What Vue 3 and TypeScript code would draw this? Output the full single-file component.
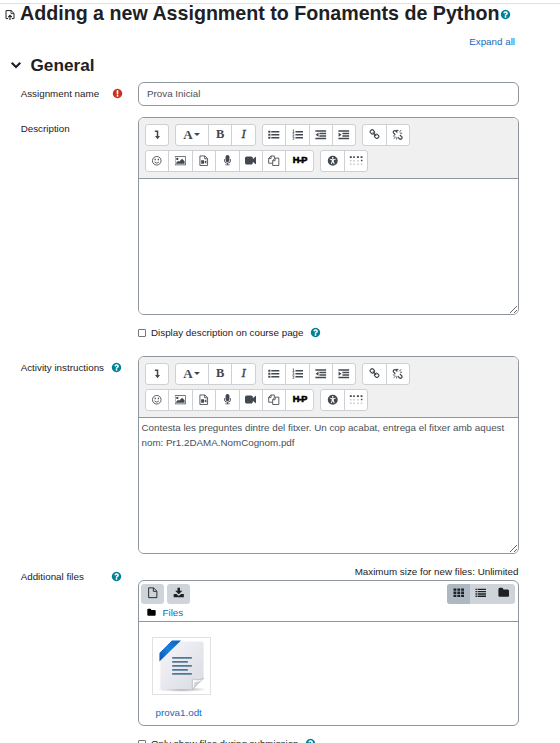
<script setup lang="ts">
import { defineComponent, h, ref } from 'vue'

interface Shape {
  d: string
  stroke?: number
  opacity?: number
}
interface Glyph {
  box: string
  shapes: Shape[]
}

const FA = '0 0 1792 1792'
const glyphs: Record<string, Glyph> = {
  help: { box: FA, shapes: [{ d: 'M1024 1376v-192q0-14-9-23t-23-9h-192q-14 0-23 9t-9 23v192q0 14 9 23t23 9h192q14 0 23-9t9-23zm256-672q0-88-55.5-163t-138.5-116-170-41q-243 0-371 213-15 24 8 42l132 100q7 6 19 6 16 0 25-12 53-68 86-92 34-24 86-24 48 0 85.5 26t37.5 59q0 38-20 61t-68 45q-63 28-115.5 86.5t-52.5 125.5v36q0 14 9 23t23 9h192q14 0 23-9t9-23q0-19 21.5-49.5t54.5-49.5q32-18 49-28.5t46-35 44.5-48 28-60.5 12.5-81zm384 192q0 209-103 385.5t-279.5 279.5-385.5 103-385.5-103-279.5-279.5-103-385.5 103-385.5 279.5-279.5 385.5-103 385.5 103 279.5 279.5 103 385.5z' }] },
  required: { box: FA, shapes: [{ d: 'M896 128q209 0 385.5 103t279.5 279.5 103 385.5-103 385.5-279.5 279.5-385.5 103-385.5-103-279.5-279.5-103-385.5 103-385.5 279.5-279.5 385.5-103zm128 1247v-190q0-14-9-23.5t-22-9.5h-192q-13 0-23 10t-10 23v190q0 13 10 23t23 10h192q13 0 22-9.5t9-23.5zm-2-344l18-621q0-12-10-18-10-8-24-8h-220q-14 0-24 8-10 6-10 18l17 621q0 10 10 17.5t24 7.5h185q14 0 23.5-7.5t10.5-17.5z' }] },
  chevron: { box: '0 0 12 12', shapes: [{ d: 'M1.7 3.8L6 8L10.3 3.8', stroke: 2.1 }] },
  assign: { box: '0 0 10 12', shapes: [{ d: 'M3.2 9.6H1V1.6H6.2L9 4.4V9.6H6.8', stroke: 1 }, { d: 'M6 1.6V4.6H9', stroke: 0.8 }, { d: 'M5 11V6.6M3.2 8.2L5 6.4L6.8 8.2', stroke: 1.1 }] },
  toggle: { box: '0 0 12 12', shapes: [{ d: 'M4 2.3H6.8V8.5', stroke: 1.6 }, { d: 'M4.2 7.2H9.4L6.8 10.6Z' }] },
  ul: { box: '0 0 12 12', shapes: [{ d: 'M.3 1.7h2.2v2.2H.3zM.3 4.9h2.2v2.2H.3zM.3 8.1h2.2v2.2H.3zM3.4 2h8.4v1.6H3.4zM3.4 5.2h8.4v1.6H3.4zM3.4 8.4h8.4V10H3.4z' }] },
  ol: { box: '0 0 12 12', shapes: [{ d: 'M3.6 2h8.2v1.6H3.6zM3.6 5.2h8.2v1.6H3.6zM3.600 8.4h8.2V10H3.6z' }, { d: 'M.7 1.2L1.6.8V3.6M.6 3.7H2.5M.6 5.1Q1.9 4.2 2.2 5.2Q2.2 5.9.7 7.1H2.5M.6 8.4H2.2L1.4 9.4Q2.5 9.7 2.2 10.6Q1.6 11.3.6 10.9', stroke: 0.7 }] },
  outdent: { box: '0 0 12 12', shapes: [{ d: 'M.4 1.3h11.2v1.5H.4zM4.600 3.9h7v1.5h-7zM4.600 6.5h7V8h-7zM.4 9.1h11.2v1.5H.4zM3.7 3.6v4.6L.6 5.900z' }] },
  indent: { box: '0 0 12 12', shapes: [{ d: 'M.4 1.3h11.2v1.5H.4zM4.600 3.9h7v1.5h-7zM4.600 6.5h7V8h-7zM.4 9.1h11.2v1.5H.4zM.6 3.6v4.6L3.7 5.900z' }] },
  link: { box: FA, shapes: [{ d: 'M1520 1216q0-40-28-68l-208-208q-28-28-68-28-42 0-72 32 3 3 19 18.5t21.5 21.5 15 19 13 25.5 3.5 27.5q0 40-28 68t-68 28q-15 0-27.5-3.5t-25.5-13-19-15-21.5-21.5-18.5-19q-33 31-33 73 0 40 28 68l206 207q27 27 68 27 40 0 68-26l147-146q28-28 28-67zm-703-705q0-40-28-68l-206-207q-28-28-68-28-39 0-68 27l-147 146q-28 28-28 67 0 40 28 68l208 208q27 27 68 27 42 0 72-31-3-3-19-18.5t-21.5-21.5-15-19-13-25.5-3.5-27.5q0-40 28-68t68-28q15 0 27.5 3.5t25.5 13 19 15 21.5 21.5 18.5 19q33-31 33-73zm895 705q0 120-85 203l-147 146q-83 83-203 83-121 0-204-85l-206-207q-83-83-83-203 0-123 88-209l-88-88q-86 88-208 88-120 0-204-84l-208-208q-84-84-84-204t85-203l147-146q83-83 203-83 121 0 204 85l206 207q83 83 83 203 0 123-88 209l88 88q86-88 208-88 120 0 204 84l208 208q84 84 84 204z' }] },
  unlink: { box: '0 0 12 12', shapes: [{ d: 'M3.600 2.6L4.6 1.600Q5.500 1 6.600 1.900M8.2 6.200L10 8Q11 9.2 10 10.200Q8.800 11.200 7.700 10.200L6 8.500M5.600 3.600L3.900 2.100Q2.700 1.200 1.700 2.200Q.9 3.300 1.800 4.300L3.500 6', stroke: 1.3 }, { d: 'M7.600 3.400L9.600 1.200M8.300 4.400H10.600M3.900 8.100L1.800 10.300M3.300 7.300H1M4.900 8.700V11', stroke: 0.9 }] },
  smile: { box: '0 0 12 12', shapes: [{ d: 'M6 1.5A4.5 4.5 0 1 1 6 10.5A4.5 4.5 0 1 1 6 1.5ZM3.7 7.2Q6 9.8 8.3 7.2', stroke: 0.9 }, { d: 'M3.7 4h1.3v1.4H3.7zM7 4h1.3v1.4H7z' }] },
  image: { box: '0 0 1920 1792', shapes: [{ d: 'M576 576q0 80-56 136t-136 56-136-56-56-136 56-136 136-56 136 56 56 136zm1024 384v448h-1408v-192l320-320 160 160 512-512zm96-704h-1600q-13 0-22.5 9.5t-9.5 22.5v1216q0 13 9.5 22.5t22.5 9.5h1600q13 0 22.5-9.5t9.5-22.5v-1216q0-13-9.5-22.5t-22.5-9.5zm160 32v1216q0 66-47 113t-113 47h-1600q-66 0-113-47t-47-113v-1216q0-66 47-113t113-47h1600q66 0 113 47t47 113z' }] },
  media: { box: '0 0 12 12', shapes: [{ d: 'M2 1H7.2L10 3.8V11H2ZM7 1V4H10', stroke: 0.9 }, { d: 'M3.3 5.6h3v3.4h-3zM6.4 7.2L8.8 5.4V9.2z' }] },
  mic: { box: FA, shapes: [{ d: 'M1472 704v128q0 221-147.5 384.5t-364.5 187.5v132h256q26 0 45 19t19 45-19 45-45 19h-640q-26 0-45-19t-19-45 19-45 45-19h256v-132q-217-24-364.5-187.5t-147.5-384.5v-128q0-26 19-45t45-19 45 19 19 45v128q0 185 131.5 316.5t316.5 131.5 316.5-131.5 131.5-316.5v-128q0-26 19-45t45-19 45 19 19 45zm-256-384v512q0 132-94 226t-226 94-226-94-94-226v-512q0-132 94-226t226-94 226 94 94 226z' }] },
  video: { box: FA, shapes: [{ d: 'M1792 352v1088q0 42-39 59-13 5-25 5-27 0-45-19l-403-403v166q0 119-84.5 203.5t-203.5 84.5h-704q-119 0-203.5-84.5t-84.5-203.5v-704q0-119 84.5-203.5t203.5-84.5h704q119 0 203.5 84.5t84.5 203.5v165l403-402q18-19 45-19 12 0 25 5 39 17 39 59z' }] },
  copy: { box: '0 0 12 12', shapes: [{ d: 'M4.8 8.6H.7V3.5L3 1H6.6V3.4M3.2 1V3.7H.7M4.9 5.8L7.3 3.3H11.3V11H4.9ZM7.4 3.3V6H4.9', stroke: 0.9 }] },
  access: { box: '0 0 12 12', shapes: [{ d: 'M6 .8A5.2 5.2 0 1 1 6 11.2A5.2 5.2 0 1 1 6 .8ZM6 2A.9.9 0 1 0 6 3.8A.9.9 0 1 0 6 2ZM2.9 3.9L2.8 4.6L4.9 5.2V6.7L4 9.4L4.8 9.6L6 7.2L7.2 9.6L8 9.4L7.1 6.7V5.2L9.2 4.6L9.1 3.9L6 4.4Z' }] },
  braille: { box: '0 0 14 12', shapes: [{ d: 'M.8 1.2h2v1.900h-2zM4.200 1.2H5.800v1.900H4.200zM7.900 1.2h2v1.900h-2zM11.600 1.2h1.900v1.900h-1.900zM11.900 4.700h1.500v1.500h-1.500z' }, { d: 'M1 5h1.5v1.5H1zM4.200 5h1.5v1.5H4.200zM1 8.4h1.5v1.5H1zM4.200 8.4h1.5v1.5H4.200zM8.2 5h1.5v1.5H8.2zM8.2 8.4h1.5v1.5H8.2zM11.800 8.4h1.5v1.5h-1.5z', opacity: 0.3 }] },
  file: { box: '0 0 12 12', shapes: [{ d: 'M1.7.9H6.8L10.3 4.3V11.1H1.7ZM6.6 1V4.5H10.2', stroke: 0.95 }] },
  download: { box: '0 0 12 12', shapes: [{ d: 'M4.7.8H7.3V4H9.8L6 7.6L2.2 4H4.7ZM.7 7.3H3.6L6 9.4L8.4 7.3H11.3V10.6H.7Z' }] },
  grid: { box: '0 0 12 12', shapes: [{ d: 'M.5 1.5h3v2.4h-3zM4.5 1.5h3v2.4h-3zM8.5 1.5h3v2.4h-3zM.5 4.8h3v2.4h-3zM4.5 4.8h3v2.4h-3zM8.5 4.8h3v2.4h-3zM.5 8.1h3v2.4h-3zM4.5 8.1h3v2.4h-3zM8.5 8.1h3v2.4h-3z' }] },
  list: { box: '0 0 12 12', shapes: [{ d: 'M.5 1.7H2v1.5H.5zM.5 4.1H2v1.5H.5zM.5 6.5H2V8H.5zM.5 8.9H2v1.5H.5zM2.7 1.7h8.8v1.5H2.7zM2.7 4.1h8.8v1.5H2.7zM2.7 6.5h8.8V8H2.7zM2.7 8.9h8.8v1.5H2.7z' }] },
  folder: { box: FA, shapes: [{ d: 'M1728 608v704q0 92-66 158t-158 66h-1216q-92 0-158-66t-66-158v-960q0-92 66-158t158-66h320q92 0 158 66t66 158v32h672q92 0 158 66t66 158z' }] },
}

const Icon = defineComponent({
  props: { name: { type: String, required: true } },
  setup(props) {
    return () => {
      const g = glyphs[props.name]
      return h(
        'svg',
        { viewBox: g.box, 'aria-hidden': 'true' },
        g.shapes.map((s) =>
          h('path', {
            d: s.d,
            fill: s.stroke ? 'none' : 'currentColor',
            'fill-rule': 'evenodd',
            stroke: s.stroke ? 'currentColor' : 'none',
            'stroke-width': s.stroke ?? 0,
            opacity: s.opacity ?? 1,
          }),
        ),
      )
    }
  },
})

const toolbarRows: string[][][] = [
  [['toggle'], ['style', 'bold', 'italic'], ['ul', 'ol', 'outdent', 'indent'], ['link', 'unlink']],
  [['smile', 'image', 'media', 'mic', 'video', 'copy', 'h5p'], ['access', 'braille']],
]
const letters: Record<string, string> = { style: 'A', bold: 'B', italic: 'I', h5p: 'H-P' }

const assignmentName = ref('Prova Inicial')
const editors = ref([
  { id: 'description', label: 'Description', help: false, text: '', checkbox: 'Display description on course page' },
  {
    id: 'instructions',
    label: 'Activity instructions',
    help: true,
    text: 'Contesta les preguntes dintre del fitxer. Un cop acabat, entrega el fitxer amb aquest nom: Pr1.2DAMA.NomCognom.pdf',
    checkbox: '',
  },
])
const views = ['grid', 'list', 'folder']
const activeView = ref('grid')
</script>

<template>
  <main class="page">
    <h2 class="title">
      <Icon name="assign" class="assign" />
      <span>Adding a new Assignment to Fonaments de Python</span>
      <Icon name="help" class="help" />
    </h2>
    <div class="expand"><a>Expand all</a></div>
    <h3 class="section">
      <Icon name="chevron" class="chevron" />
      <span>General</span>
    </h3>

    <div class="row name-row">
      <div class="label">
        <span>Assignment name</span>
        <Icon name="required" class="help required" />
      </div>
      <input v-model="assignmentName" class="field" type="text" />
    </div>

    <div v-for="e in editors" :key="e.id" class="row editor-row">
      <div class="label editor-label">
        <span>{{ e.label }}</span>
        <Icon v-if="e.help" name="help" class="help" />
      </div>
      <div class="content">
        <div class="editor">
          <div class="toolbar">
            <div v-for="(groups, r) in toolbarRows" :key="r" class="tool-row">
              <div v-for="(group, g) in groups" :key="g" class="group">
                <button v-for="b in group" :key="b" type="button" class="tool" :class="'tool-' + b">
                  <span v-if="letters[b]">{{ letters[b] }}</span>
                  <Icon v-else :name="b" class="tool-icon" />
                  <i v-if="b === 'style'" class="caret"></i>
                </button>
              </div>
            </div>
          </div>
          <textarea v-model="e.text" class="area" spellcheck="false"></textarea>
        </div>
        <label v-if="e.checkbox" class="check">
          <input type="checkbox" />
          <span>{{ e.checkbox }}</span>
          <Icon name="help" class="help" />
        </label>
      </div>
    </div>

    <div class="row files-row">
      <div class="label files-label">
        <span>Additional files</span>
        <Icon name="help" class="help" />
      </div>
      <div class="content">
        <div class="limit">Maximum size for new files: Unlimited</div>
        <div class="manager">
          <div class="manager-head">
            <div class="manager-bar">
              <div class="actions">
                <button type="button" class="act"><Icon name="file" class="act-icon" /></button>
                <button type="button" class="act"><Icon name="download" class="act-icon" /></button>
              </div>
              <div class="views">
                <button
                  v-for="v in views"
                  :key="v"
                  type="button"
                  class="view"
                  :class="{ active: v === activeView }"
                  @click="activeView = v"
                >
                  <Icon :name="v" class="act-icon" />
                </button>
              </div>
            </div>
            <div class="crumb">
              <Icon name="folder" class="crumb-icon" />
              <a>Files</a>
            </div>
          </div>
          <div class="tile">
            <div class="thumb">
              <svg viewBox="0 0 56 56" class="doc">
                <defs>
                  <linearGradient id="paper" x1="0" y1="0" x2="1" y2="1">
                    <stop offset="0" stop-color="#f6f6f9" />
                    <stop offset="1" stop-color="#d9dae3" />
                  </linearGradient>
                  <linearGradient id="ribbon" x1="0" y1="1" x2="1" y2="0">
                    <stop offset="0" stop-color="#0b50a8" />
                    <stop offset=".5" stop-color="#1a80dd" />
                    <stop offset="1" stop-color="#0e5cb8" />
                  </linearGradient>
                  <radialGradient id="shade">
                    <stop offset="0" stop-color="#777" stop-opacity=".8" />
                    <stop offset="1" stop-color="#999" stop-opacity="0" />
                  </radialGradient>
                </defs>
                <ellipse cx="28" cy="51.3" rx="26" ry="2.6" fill="url(#shade)" />
                <path d="M8 2.5H48Q50 2.5 50 4.500V40L38.500 51.500H8Q6 51.500 6 49.500V4.500Q6 2.500 8 2.500Z" fill="url(#paper)" />
                <path d="M50 40L38.500 51.500V41.500Q39 39.500 41 41.500Q46 42 50 40Z" fill="#fafafa" stroke="#aaacb3" stroke-width=".7" />
                <path d="M39.500 50.500L41 44L47.500 42.500Z" fill="#cfd0d4" />
                <path d="M5 23V14L17.500 1.500H27Z" fill="url(#ribbon)" />
                <path d="M4 15V1H18Z" fill="#fff" />
                <path d="M18 19.200H38M18 23.300H34M18 27.400H38M18 31.400H34M18 35.500H38" stroke="#4f7a96" stroke-width="1.700" />
              </svg>
            </div>
            <a class="file-name">prova1.odt</a>
          </div>
        </div>
        <label class="check last-check">
          <input type="checkbox" />
          <span>Only show files during submission</span>
          <Icon name="help" class="help" />
        </label>
      </div>
    </div>
  </main>
</template>

<style>
body {
  background: #fff;
  overflow: hidden;
}
</style>

<style scoped>
.page {
  box-sizing: border-box;
  width: 560px;
  margin-top: 3px;
  border-top: 1px solid #dee2e6;
  background: #fff;
  color: #1d2125;
  font: 9.8px/15px 'Liberation Sans', Arial, sans-serif;
}
svg {
  display: block;
  flex: none;
}
button {
  box-sizing: border-box;
  margin: 0;
  padding: 0;
  border: 0;
}
a {
  color: #0f6cbf;
}
.title {
  display: flex;
  align-items: center;
  height: 18px;
  margin: 0;
  padding-left: 5px;
  font-size: 19.650px;
  line-height: 18px;
  white-space: nowrap;
}
.assign {
  width: 10px;
  height: 12px;
  margin: 3px 5px 0 0;
}
.help {
  width: 11px;
  height: 11px;
  color: #008196;
}
.title .help {
  margin: 2px 0 0 1px;
}
.expand {
  height: 15px;
  margin-top: 12px;
  padding-right: 45px;
  text-align: right;
}
.section {
  display: flex;
  align-items: center;
  height: 24px;
  margin: 4px 0 0 10px;
  font-size: 17.200px;
  line-height: 24px;
}
.chevron {
  width: 12px;
  height: 12px;
  margin-right: 8.500px;
}
.row {
  display: flex;
  width: 519px;
}
.label {
  box-sizing: border-box;
  display: flex;
  justify-content: space-between;
  align-items: center;
  flex: none;
  width: 138px;
  height: 15px;
  padding: 0 16px 0 20.700px;
}
.content {
  flex: 1;
  min-width: 0;
}
.name-row {
  align-items: center;
  height: 24px;
  margin-top: 5px;
}
.required {
  color: #ca3120;
}
.name-row .label {
  margin-bottom: 2px;
  padding-right: 15.200px;
}
.field {
  box-sizing: border-box;
  flex: 1;
  min-width: 0;
  height: 24px;
  padding: 0 8px 2px;
  border: 1px solid #8f959e;
  border-radius: 6px;
  color: #495057;
  background: #fff;
  font: inherit;
}
.editor-row {
  margin-top: 11px;
}
.editor-row + .editor-row {
  margin-top: 16px;
}
.editor-label {
  margin-top: 4px;
}
.editor {
  box-sizing: border-box;
  height: 198px;
  overflow: hidden;
  border: 1px solid #8f959e;
  border-radius: 6px;
}
.toolbar {
  box-sizing: border-box;
  display: flex;
  flex-direction: column;
  gap: 4px;
  height: 61px;
  padding: 6px 6px 0;
  border-bottom: 1px solid #8f959e;
  background: #f0f0f0;
}
.tool-row {
  display: flex;
  gap: 6px;
}
.group {
  box-sizing: border-box;
  display: flex;
  height: 22px;
  border: 1px solid #ced0d3;
  border-radius: 3px;
  background: #fff;
}
.tool {
  display: flex;
  align-items: center;
  justify-content: center;
  width: 23.400px;
  padding-bottom: 1px;
  background: none;
  color: #414850;
  font: bold 12.500px/19px 'Liberation Serif', serif;
}
.tool:first-child {
  width: 22.400px;
}
.tool:only-child {
  width: 21.500px;
}
.tool + .tool {
  border-left: 1px solid #ced0d3;
}
.tool.tool-style {
  gap: 1.500px;
  width: 32.600px;
}
.tool-style span {
  font-size: 13px;
}
.tool-italic {
  font-weight: normal;
  font-style: italic;
  -webkit-text-stroke: 0.400px #414850;
}
.tool.tool-h5p {
  width: 28px;
  color: #000;
  font: bold 9.200px/19px 'Liberation Sans', sans-serif;
  letter-spacing: -0.500px;
  -webkit-text-stroke: 0.600px #000;
}
.tool-icon {
  width: 11.500px;
  height: 11.500px;
}
.tool-video .tool-icon,
.tool-link .tool-icon,
.tool-mic .tool-icon {
  width: 11px;
  height: 11px;
}
.tool-braille .tool-icon {
  width: 14px;
  height: 12px;
}
.caret {
  border: 3.500px solid transparent;
  border-top-color: #414850;
  border-bottom: 0;
}
.area {
  box-sizing: border-box;
  display: block;
  width: 100%;
  height: 135px;
  padding: 2px 3px 2px 2.500px;
  border: 0;
  outline: 0;
  resize: vertical;
  background: #fff;
  color: #495057;
  font: 9.800px/15px 'Liberation Sans', Arial, sans-serif;
}
.check {
  display: flex;
  align-items: center;
  height: 15px;
  margin-top: 10px;
}
.check input {
  box-sizing: border-box;
  appearance: none;
  width: 8px;
  height: 8px;
  margin: 0 5px 0 0;
  border: 1px solid #767676;
  border-radius: 1px;
  background: #fff;
}
.check .help {
  margin-left: 6.500px;
}
.files-row {
  margin-top: 10px;
}
.files-label {
  margin-top: 5px;
}
.limit {
  height: 15px;
  padding-right: 0.500px;
  text-align: right;
}
.manager {
  box-sizing: border-box;
  height: 146px;
  margin-top: 1px;
  border: 1px solid #8f959e;
  border-radius: 6px;
}
.manager-head {
  box-sizing: border-box;
  height: 41px;
  padding: 3px 3px 0 2px;
  border-bottom: 1px solid #8f959e;
}
.manager-bar {
  display: flex;
  justify-content: space-between;
}
.actions {
  display: flex;
  gap: 3px;
}
.act {
  display: flex;
  justify-content: center;
  width: 23px;
  height: 20px;
  padding-top: 3px;
  border-radius: 3px;
  background: #ced4da;
  color: #1d2125;
}
.act-icon {
  width: 11.500px;
  height: 11.500px;
}
.views {
  display: flex;
  overflow: hidden;
  height: 20px;
  border-radius: 3px;
  background: #ced4da;
}
.view {
  display: flex;
  justify-content: center;
  width: 22.600px;
  padding-top: 3px;
  background: none;
  color: #1d2125;
}
.view.active {
  background: #adb8c2;
}
.crumb {
  display: flex;
  align-items: center;
  gap: 7px;
  height: 15px;
  margin-top: 1px;
  padding-left: 5.500px;
}
.crumb-icon {
  width: 9px;
  height: 9px;
  color: #000;
}
.tile {
  width: 60px;
  margin: 15px 0 0 13px;
}
.thumb {
  box-sizing: border-box;
  width: 59px;
  height: 58px;
  padding: 1px;
  border: 1px solid #dee2e6;
}
.doc {
  width: 56px;
  height: 55px;
}
.file-name {
  display: block;
  margin-top: 10px;
  padding-left: 3.500px;
}
.last-check {
  margin-top: 10px;
}
</style>
